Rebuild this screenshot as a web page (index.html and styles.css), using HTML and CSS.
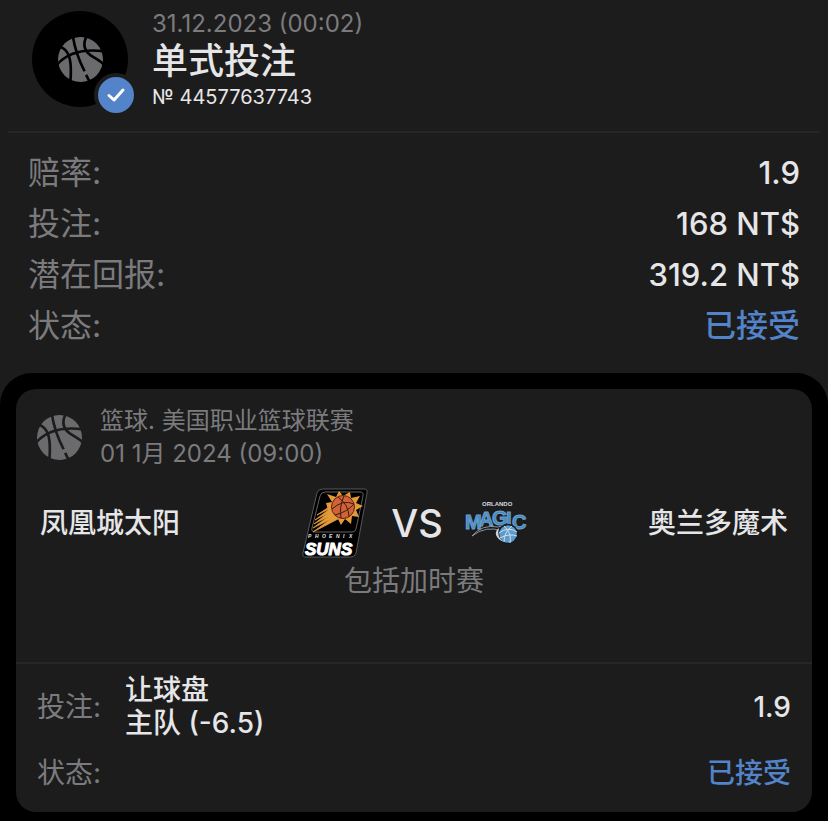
FILE: index.html
```
<!DOCTYPE html>
<html lang="zh-CN">
<head>
  <meta charset="UTF-8" />
  <meta name="viewport" content="width=device-width, initial-scale=1.0" />
  <title>单式投注</title>
  <link rel="stylesheet" href="styles.css">
</head>
<body>

  <svg class="defs" aria-hidden="true">
    <symbol id="basketball" viewBox="0 0 44 44">
      <mask id="seams">
        <circle cx="22" cy="22" r="22" fill="#fff" />
        <g fill="none" stroke="#000" stroke-width="2.6">
          <path d="M14.500 -1 C16 9 19 20 26 33.500 M27.500 37 L31 44" />
          <path d="M-1 27 C8 17 22 11 45 14" />
          <path d="M1 9 C11 12 14 22 12 45" />
          <path d="M28 -1 C24 7 25 13 32 18 C38 22 41 23 45 27" />
        </g>
      </mask>
      <rect width="44" height="44" fill="currentColor" mask="url(#seams)" />
    </symbol>
  </svg>

  <header>
    <div class="avatar">
      <svg class="ball"><use href="#basketball" /></svg>
      <span class="badge">
        <svg viewBox="0 0 36 36"><path d="M11 18.500 L16 23 L25 13" /></svg>
      </span>
    </div>
    <div class="title">
      <time>31.12.2023 (00:02)</time>
      <h1>单式投注</h1>
      <p>№ 44577637743</p>
    </div>
  </header>

  <dl class="summary">
    <div><dt>赔率:</dt><dd>1.9</dd></div>
    <div><dt>投注:</dt><dd>168 NT$</dd></div>
    <div><dt>潜在回报:</dt><dd>319.2 NT$</dd></div>
    <div><dt>状态:</dt><dd class="accepted">已接受</dd></div>
  </dl>

  <main>
    <section class="card">
      <div class="league">
        <svg class="ball"><use href="#basketball" /></svg>
        <div>
          <p>篮球. 美国职业篮球联赛</p>
          <time>01 1月 2024 (09:00)</time>
        </div>
      </div>

      <div class="match">
        <h2>凤凰城太阳</h2>
        <div class="versus">
          <svg class="suns" viewBox="0 0 68 72">
            <path d="M22 2 H63 Q67 2 66 6 L55 66 Q54 70 50 70 H5 Q1 70 2 66 L16 6 Q17 2 22 2Z" fill="#000" stroke="#77777a" stroke-width=".7" />
            <path d="M24 5 H59 Q63 5 62 9 L55 42 Q54 45 51 45 H14 Q10 45 11 41 L19 9 Q20 5 24 5Z" fill="none" stroke="#8c8c8e" stroke-width=".7" />
            <g fill="#e59a3a">
              <path d="M25 16 L31 15 L26 7 L35 10 L38 4 L42 9 L49 5 L50 11 L59 9 L55 16 L62 19 L55 23 L58 30 L51 29 L50 37 L44 32 L40 38 L37 32 L30 33 Z" />
              <path d="M31 18 L16 28 L30 21Z M30 21 L14 33 L31 24Z M31 23 L13 37 L32 27Z M32 26 L12 41 L34 30Z M34 29 L12 45 L37 32Z" stroke="#e59a3a" stroke-width=".8" />
            </g>
            <circle cx="42" cy="20" r="11.500" fill="#cf6236" stroke="#5b2614" />
            <path d="M31 22 Q42 12 53 17 M34 28 Q46 25 53 17 M37 10 Q48 18 48 30 M43 9 Q38 20 40 31" fill="none" stroke="#3c1b14" />
            <text class="suns-city" x="7 14 21 28 35 42 48" y="51">PHOENIX</text>
            <text class="suns-name" x="4" y="68">SUNS</text>
          </svg>
          <span>VS</span>
          <svg class="magic" viewBox="0 0 62 48">
            <text class="magic-city" x="17" y="7">ORLANDO</text>
            <text class="magic-name" x="0 14 27 41 47" y="30 27 26 27 30">MAGIC</text>
            <path d="M7 37 Q17 25 33 28 L45 25 L37 32 Q21 26 7 37Z" fill="#10151c" stroke="#a9b4bd" stroke-width=".8" />
            <circle cx="43" cy="35" r="9.500" fill="#5b9bd0" stroke="#15191f" stroke-width="1.500" />
            <path d="M34 34 Q43 27 52 33 M35 39 Q44 34 52 37 M39 27 Q47 34 45 44 M47 27 Q39 33 39 43" fill="none" stroke="#d7dde2" stroke-width="1" />
            <path d="M34 29 Q31 38 39 43 Q33 41 31 36 Q30 32 34 29Z" fill="#cbd3d9" />
          </svg>
        </div>
        <h2>奥兰多魔术</h2>
      </div>
      <p class="note">包括加时赛</p>

      <dl class="bet">
        <dt>投注:</dt>
        <dd class="pick">让球盘<br>主队 (-6.5)</dd>
        <dd class="odds">1.9</dd>
        <dt>状态:</dt>
        <dd class="status accepted">已接受</dd>
      </dl>
    </section>
  </main>

</body>
</html>
```
FILE: styles.css
```
* { box-sizing: border-box; margin: 0; padding: 0; }
body {
  min-height: 100vh;
  display: flex; flex-direction: column;
  background: #1c1c1c; color: #e6e6e8;
  font-family: Inter, "Noto Sans CJK SC", sans-serif;
}
svg { display: block; }
.defs { position: absolute; width: 0; height: 0; }

header {
  display: flex; gap: 24px;
  margin: 0 8px; padding: 10px 24px 21px;
  border-bottom: 2px solid #262626;
}
.avatar {
  position: relative;
  width: 96px; height: 96px; margin-top: 1px;
  display: flex; justify-content: center; align-items: center;
  background: #000; border-radius: 50%;
}
.ball { width: 45px; height: 45px; color: #6b6b6d; }
.badge {
  position: absolute; right: -10px; bottom: -10px;
  border: 4px solid #1c1c1c; border-radius: 50%;
  background: #5383c9;
}
.badge svg { width: 36px; height: 36px; }
.badge path {
  fill: none; stroke: white; stroke-width: 3;
  stroke-linecap: round; stroke-linejoin: round;
}
.title time {
  display: block;
  font-size: 24px; line-height: 28px; color: #7b7b7e;
}
.title h1 { font-size: 36px; line-height: 46px; font-weight: 500; }
.title p { font-size: 20px; line-height: 26px; }

.summary { padding: 14px 28px 22px; font-size: 32px; line-height: 51px; }
.summary div { display: flex; justify-content: space-between; }
.summary dd { font-size: 31px; }
.summary .accepted { font-size: 32px; }
dt { color: #7b7b7e; }
dd { font-weight: 500; }
.accepted { color: #5383c9; }

main {
  flex: 1; padding: 16px 16px 9px;
  background: #000; border-radius: 32px 32px 0 0;
}
.card { background: #1c1c1c; border-radius: 20px; overflow: hidden; }
.league {
  display: flex; align-items: center; gap: 18px;
  padding: 15px 21px 0;
  font-size: 24px; line-height: 33px; color: #7b7b7e;
}

.match {
  display: grid; grid-template-columns: 1fr auto 1fr;
  align-items: center; padding: 17px 24px 0;
}
.match h2 { font-size: 28px; line-height: 36px; font-weight: 500; }
.match h2:last-child { text-align: right; }
.versus { display: flex; align-items: center; gap: 22px; font-size: 38px; font-weight: 500; }
.suns { width: 68px; height: 72px; }
.magic { width: 62px; height: 48px; }
.suns-city { font: bold italic 5px "Liberation Sans", sans-serif; fill: #e6e6e8; }
.suns-name { font: bold italic 17px "Liberation Sans", sans-serif; fill: white; stroke: white; stroke-width: 1px; }
.magic-city { font: bold 6px "Liberation Sans", sans-serif; fill: #d7dde2; }
.magic-name {
  font: bold 20px "Liberation Sans", sans-serif;
  fill: #3f8bcb; stroke: #6f9fc8; stroke-width: 1px;
}
.note {
  padding: 4px 24px 63px; text-align: center;
  font-size: 28px; line-height: 36px; color: #7b7b7e;
}

.bet {
  display: grid; grid-template-columns: auto 1fr auto;
  align-items: center; gap: 13px 24px;
  padding: 10px 21px 19px; border-top: 2px solid #262626;
  font-size: 28px; line-height: 40px;
}
.pick { line-height: 33px; }
.odds, .status { text-align: right; }
.status { grid-column: 2 / 4; }
```
